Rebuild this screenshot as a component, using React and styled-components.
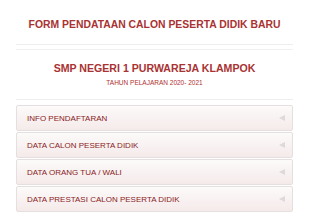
import React from 'react'
import styled, { createGlobalStyle } from 'styled-components'

const GlobalStyle = createGlobalStyle`
  html, body {
    margin: 0;
    padding: 0;
    background: #ffffff;
    font-family: "Liberation Sans", Arial, sans-serif;
  }
`;

const Page = styled.div`
  width: 310px;
  padding: 0 17px 0 16px;
  box-sizing: border-box;
`;

const Header = styled.div`
  padding-top: 19px;
  padding-bottom: 13px;
  border-bottom: 1px solid #eeeeee;
  text-align: center;
`;

const Title = styled.h1`
  margin: 0;
  font-size: 10.4px;
  font-weight: bold;
  color: #a93232;
  line-height: 12px;
  white-space: nowrap;
`;

const School = styled.div`
  margin-top: 4px;
  border-top: 1px solid #f0f0f0;
  padding-top: 12px;
  padding-bottom: 12px;
  border-bottom: 1px solid #eeeeee;
  text-align: center;
`;

const SchoolName = styled.h2`
  margin: 0;
  font-size: 10.6px;
  font-weight: bold;
  color: #a93232;
  line-height: 12px;
`;

const Year = styled.p`
  margin: 5px 0 0;
  font-size: 6.5px;
  color: #b03030;
  line-height: 8px;
`;

const Panels = styled.div`
  margin-top: 5px;
  display: flex;
  flex-direction: column;
  gap: 1px;
`;

const Panel = styled.div`
  height: 26px;
  box-sizing: border-box;
  border: 1px solid #e6dfdf;
  border-radius: 2px;
  background: linear-gradient(to bottom, #fcfafa, #f5eaea);
  display: flex;
  align-items: center;
  justify-content: space-between;
  padding: 0 7px 0 10px;
`;

const PanelTitle = styled.span`
  font-size: 8px;
  color: #8a2222;
`;

const Arrow = styled.span`
  width: 0;
  height: 0;
  border-top: 3.5px solid transparent;
  border-bottom: 3.5px solid transparent;
  border-right: 6px solid #dedada;
`;

const items = [
  'INFO PENDAFTARAN',
  'DATA CALON PESERTA DIDIK',
  'DATA ORANG TUA / WALI',
  'DATA PRESTASI CALON PESERTA DIDIK',
];

const App = () => {
  return (
    <Page>
      <GlobalStyle />
      <Header>
        <Title>FORM PENDATAAN CALON PESERTA DIDIK BARU</Title>
      </Header>
      <School>
        <SchoolName>SMP NEGERI 1 PURWAREJA KLAMPOK</SchoolName>
        <Year>TAHUN PELAJARAN 2020- 2021</Year>
      </School>
      <Panels>
        {items.map((it) => (
          <Panel key={it}>
            <PanelTitle>{it}</PanelTitle>
            <Arrow />
          </Panel>
        ))}
      </Panels>
    </Page>
  )
}

export default App;
